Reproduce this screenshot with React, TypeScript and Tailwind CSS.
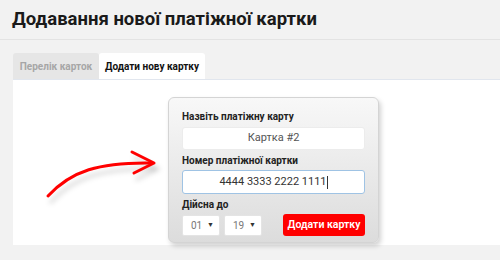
function Arrow() {
  return (
    <svg width="160" height="60" viewBox="0 0 160 60" className="overflow-visible">
      <defs>
        <filter id="sh" x="-20%" y="-50%" width="140%" height="200%">
          <feGaussianBlur stdDeviation="2.5" />
        </filter>
      </defs>
      <g fill="none" stroke="#000" strokeOpacity="0.12" strokeWidth="4" strokeLinecap="round" filter="url(#sh)" transform="translate(3 6)">
        <path d="M35 46 C 58 21, 86 12, 139 13" />
        <path d="M119 2 L 141 13 L 121 23" />
      </g>
      <g fill="none" stroke="#ff0000" strokeWidth="3" strokeLinecap="round" strokeLinejoin="round">
        <path d="M35 46 C 58 21, 86 12, 139 13" />
        <path d="M119 2 L 141 13 L 121 23" />
      </g>
    </svg>
  );
}

function Select({ value }: { value: string }) {
  return (
    <div className="w-[38px] h-[21px] bg-white rounded-[2px] border border-[#e4e4e4] flex items-center justify-between pl-[8px] pr-[5px] text-[10px] text-[#777]">
      <span>{value}</span>
      <span className="text-[7px] text-[#333]">▼</span>
    </div>
  );
}

export default function App() {
  return (
    <div className="w-[500px] h-[260px] bg-[#f2f2f2] overflow-hidden font-['Roboto',sans-serif] text-[#222]">
      <header className="h-[40px] border-b border-[#e3e3e3] pl-[12px] pt-[5px]">
        <h1 className="text-[18.5px] font-bold leading-[28px] text-[#1a1a1a]">
          Додавання нової платіжної картки
        </h1>
      </header>

      <div className="pl-[13px] pt-[13px]">
        <div className="flex h-[27px] border-b border-[#e1e6ee]">
          <div className="w-[86px] rounded-t-[3px] bg-[#e6e6e6] text-[#a6a6a6] text-[10px] font-bold flex items-center justify-center">
            Перелік карток
          </div>
          <div className="w-[106px] rounded-t-[3px] bg-white text-[#111] text-[10px] font-bold flex items-center justify-center">
            Додати нову картку
          </div>
        </div>

        <div className="bg-white h-[165px] relative">
          <div className="absolute left-[0px] top-[70px]">
            <Arrow />
          </div>
          <div className="pl-[155px] pt-[17px]">
            <div className="w-[211px] h-[146px] rounded-[6px] border border-[#d4d4d4] bg-gradient-to-b from-[#f8f8f8] to-[#dcdcdc] shadow-[2px_3px_5px_rgba(0,0,0,0.18)] px-[13px] pt-[13px]">
              <label className="block text-[10px] font-bold leading-[12px] text-[#222]">Назвіть платіжну карту</label>
              <div className="mt-[4px] h-[23px] bg-white rounded-[3px] border border-[#ececec] flex items-center justify-center text-[11px] text-[#555]">
                Картка #2
              </div>
              <label className="block mt-[5px] text-[10px] font-bold leading-[12px] text-[#222]">Номер платіжної картки</label>
              <div className="mt-[3px] h-[24px] bg-white rounded-[3px] border border-[#9fc3e4] flex items-center justify-center text-[11px] text-[#333]">
                <span>4444 3333 2222 1111</span>
                <span className="w-px h-[13px] bg-[#333]" />
              </div>
              <label className="block mt-[5px] text-[10px] font-bold leading-[12px] text-[#222]">Дійсна до</label>
              <div className="mt-[3px] flex items-center">
                <Select value="01" />
                <div className="w-[4px]" />
                <Select value="19" />
                <button className="ml-auto h-[22px] w-[82px] rounded-[3px] bg-[#ff0000] text-white text-[10.5px] font-semibold flex items-center justify-center">
                  Додати картку
                </button>
              </div>
            </div>
          </div>
        </div>
      </div>
    </div>
  );
}
